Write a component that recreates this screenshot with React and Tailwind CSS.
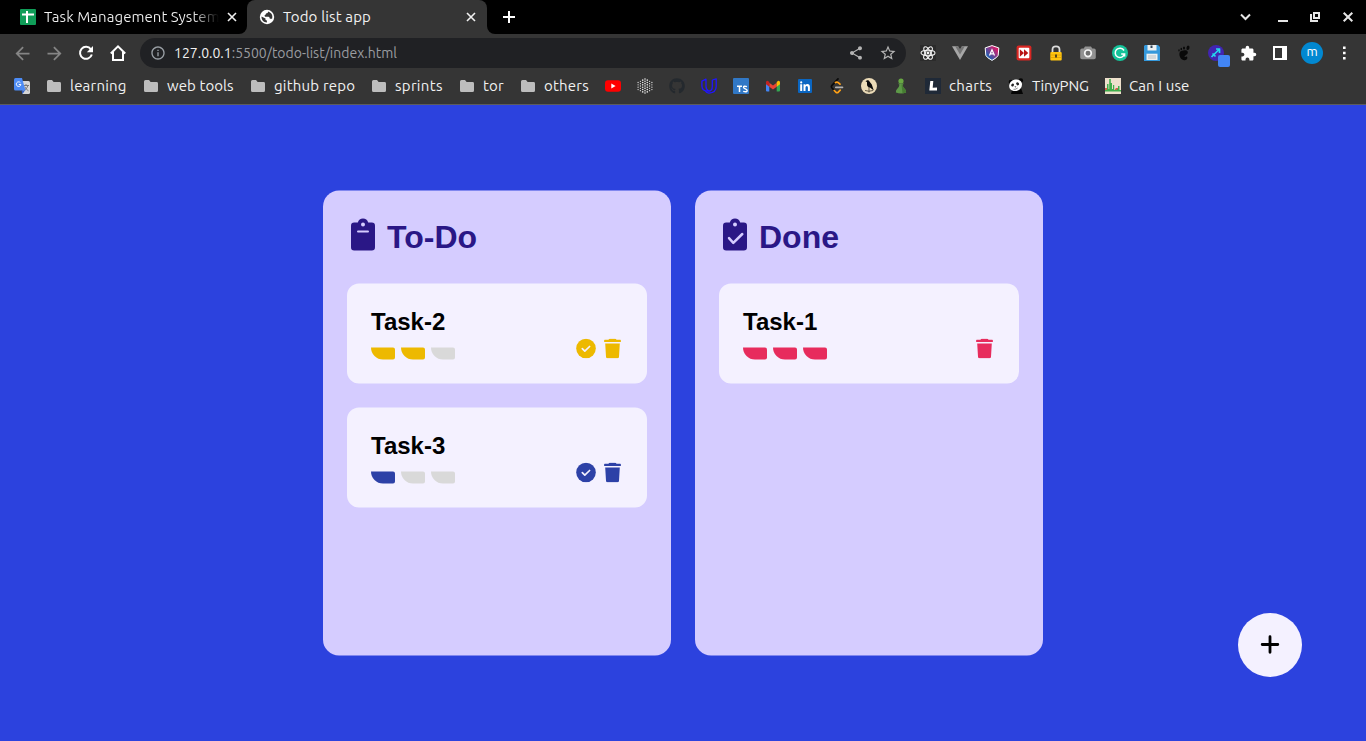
import React from "react";
import { FaGithub } from "react-icons/fa";
import { MdShare, MdStarBorder, MdExtension, MdInfoOutline, MdArrowBack, MdArrowForward } from "react-icons/md";

const Cell = ({ children }) => (
  <div className="flex h-8 w-8 shrink-0 items-center justify-center">{children}</div>
);

const Svg16 = ({ children }) => (
  <svg width="16" height="16" viewBox="0 0 16 16" className="shrink-0">{children}</svg>
);

const TabClose = () => (
  <svg width="14" height="14" viewBox="0 0 14 14" className="shrink-0">
    <path d="M3 3l8 8M11 3l-8 8" stroke="#f1f1f1" strokeWidth="1.600" />
  </svg>
);

const Reload = () => (
  <Svg16>
    <path d="M12.900 4.300A6 6 0 1 0 13.800 9.500" stroke="#fff" strokeWidth="2" fill="none" />
    <path d="M15 1v6.200H8.800z" fill="#fff" />
  </Svg16>
);

const Globe = () => (
  <Svg16>
    <circle cx="8" cy="8" r="7.200" fill="#fff" />
    <path d="M9.200 2.600c-.2 1.300-.8 1.900-2.200 2-.2 1.100-.7 1.500-1.500 1.700l.5 1.500h3.400c1 .2 1.300.9 1.400 2h2.300c.8-2.400.2-5.700-3.900-7.200z" fill="#353535" />
    <path d="M2.500 7.600l4 1.900v1.600l1.400.3v2.200C4.500 13.500 2.300 11 2.500 7.600z" fill="#353535" />
  </Svg16>
);

const ReactLogo = () => (
  <Svg16>
    <rect width="16" height="16" fill="#2b2b2b" />
    <g fill="none" stroke="#f2f2f2" strokeWidth="1.100">
      <ellipse cx="8" cy="8" rx="7" ry="2.700" />
      <ellipse cx="8" cy="8" rx="7" ry="2.700" transform="rotate(60 8 8)" />
      <ellipse cx="8" cy="8" rx="7" ry="2.700" transform="rotate(120 8 8)" />
    </g>
    <circle cx="8" cy="8" r="1.400" fill="#f2f2f2" />
  </Svg16>
);

const Folder = () => (
  <Svg16>
    <path d="M1 3.500Q1 2 2.500 2H6l1.600 2h6Q15 4 15 5.400v7.100Q15 14 13.500 14h-11Q1 14 1 12.500z" fill="#bdbdbd" />
  </Svg16>
);

const Translate = () => (
  <Svg16>
    <path d="M8 3h6.500Q16 3 16 4.500v10Q16 16 14.500 16H8.500z" fill="#d6d6d6" />
    <path d="M9 7.500h6M12 6v1.500M14 7.500q-1 3.500-4 5M10.800 8.800q1.500 3 3.700 4" stroke="#727272" strokeWidth=".9" fill="none" />
    <path d="M1.500 0H8l3.500 12.500H1.500Q0 12.500 0 11V1.500Q0 0 1.500 0z" fill="#4c8bf5" />
    <path d="M11 12.500L8.500 16l-1-3.500z" fill="#2f5fc4" />
    <path d="M6.400 4.700A2.300 2.300 0 1 0 6.900 6.500H4.800" stroke="#fff" strokeWidth="1" fill="none" />
  </Svg16>
);

const Youtube = () => (
  <Svg16>
    <rect x="0" y="2.300" width="16" height="11.500" rx="3" fill="#f00" />
    <path d="M6.300 5.500v5l4.300-2.500z" fill="#fff" />
  </Svg16>
);

const dots = [];
for (let c = 0; c < 7; c++) {
  const n = 7 - Math.abs(c - 3);
  for (let i = 0; i < n; i++) dots.push([8 + (c - 3) * 2.300, 8 + (i - (n - 1) / 2) * 2.350, Math.abs(c - 3)]);
}
const DotGrid = () => (
  <Svg16>
    {dots.map(([x, y, d], i) => (
      <circle key={i} cx={x} cy={y} r={d < 2 ? 0.800 : 0.650} fill="#e4e4e4" />
    ))}
  </Svg16>
);

const Udacity = () => (
  <Svg16>
    <path d="M.9 3.200L5 1.200v7.300q0 3.200 3 4.600Q.9 13.500.9 8z" stroke="#2015ff" strokeWidth="1.300" strokeLinejoin="round" fill="none" />
    <path d="M11.300 2L15.200.8v7.700q0 6-7.200 6.700-2.500-.3-3.500-2M8 13.100q3.300-.3 3.300-4.600V2" stroke="#2015ff" strokeWidth="1.300" strokeLinejoin="round" fill="none" />
  </Svg16>
);

const TypeScript = () => (
  <Svg16>
    <rect width="16" height="16" rx="1" fill="#3178c6" />
    <path d="M4 8.200h5M6.500 8.200V14" stroke="#fff" strokeWidth="1.500" fill="none" />
    <path d="M14 8.700q-3.500-1.100-3.500.6 0 .9 1.800 1.500 1.900.8 1.900 1.800 0 1.900-4 .7" stroke="#fff" strokeWidth="1.400" fill="none" />
  </Svg16>
);

const Gmail = () => (
  <Svg16>
    <path d="M1 4v8.500q0 1 1 1h2.300V6.500z" fill="#4285f4" />
    <path d="M15 4v8.500q0 1-1 1h-2.300V6.500z" fill="#34a853" />
    <path d="M4.300 4.800L8 7.600l3.700-2.800v4L8 11.600 4.300 8.800z" fill="#ea4335" />
    <path d="M1 4.300Q1 2.500 2.700 2.700l1.600 1.200v4.800L1 6.200z" fill="#c5221f" />
    <path d="M15 4.300q0-1.800-1.700-1.600l-1.600 1.200v4.800L15 6.200z" fill="#fbbc04" />
  </Svg16>
);

const LinkedIn = () => (
  <Svg16>
    <rect x="1" y="1" width="14" height="14" rx="1" fill="#0a66c2" />
    <circle cx="4.200" cy="4.400" r="1.100" fill="#fff" />
    <path d="M3.200 6.300h2V13h-2zM6.500 6.300h1.900v.9q.7-1.100 2-1.100 2.500 0 2.500 3V13h-2V9.600q0-1.700-1.100-1.700-1.300 0-1.300 1.700V13h-2z" fill="#fff" />
  </Svg16>
);

const Leet = () => (
  <Svg16>
    <path d="M9 .9L3 7.300q-1.200 1.300 0 2.700l2.200 2.300" stroke="#0a0a0a" strokeWidth="1.700" strokeLinecap="round" fill="none" />
    <path d="M6.500 4.500q1.400-1 2.800.1l1.700 1.600M5.200 12.500l1.700 1.700q1.200.9 2.400 0l1.900-2" stroke="#ffa116" strokeWidth="1.700" fill="none" strokeLinecap="round" />
    <path d="M6.800 9.300h6.700" stroke="#b3b3b3" strokeWidth="1.700" strokeLinecap="round" />
  </Svg16>
);

const Bird = () => (
  <Svg16>
    <circle cx="8" cy="8" r="8" fill="#ecdcb8" />
    <path d="M4.500 3.200l1.700-1q1.800-.3 2.300 1.300l2.300 3.100 2 5.800-3.500-2.600Q5.800 9 6 6.300V4z" fill="#0b0b0b" />
    <path d="M8 9v5.500M4 12.500q4 1.500 8 0" stroke="#40382b" strokeWidth=".8" fill="none" />
  </Svg16>
);

const Pawn = () => (
  <Svg16>
    <circle cx="8" cy="3" r="2.600" fill="#68a843" />
    <path d="M4.900 5.500h6.200l-1.500 1.300q.2 3.100 2.700 4.600.9.900.8 3.200Q8 16.600 2.900 14.600q-.1-2.300.8-3.200 2.500-1.500 2.700-4.600z" fill="#5d9948" />
    <path d="M8.500 6.500h1.100q.2 3.500 2.700 4.900.9.900.8 3.200-1.600.7-3.600.8z" fill="#467c32" />
  </Svg16>
);

const LIcon = () => (
  <Svg16>
    <rect width="16" height="16" fill="#1f2937" />
    <path d="M5.300 3H8.300L7.700 9.700l4.300-.2V12.500H4.300z" fill="#fff" />
  </Svg16>
);

const Panda = () => (
  <Svg16>
    <path d="M4 12l9-2 2 6H3z" fill="#050505" />
    <circle cx="3" cy="4" r="2.300" fill="#050505" />
    <circle cx="12.800" cy="2.600" r="2.300" fill="#050505" />
    <path d="M1.200 7.300Q2 2.400 7 1.500q5.500-.7 6.800 3.500.8 3.800-1.800 6.200-4 3-7.800 1.300Q.8 11 1.200 7.300z" fill="#fff" />
    <ellipse cx="4.600" cy="7" rx="1.300" ry="1.600" transform="rotate(35 4.600 7)" fill="#222" />
    <ellipse cx="9.600" cy="5.800" rx="1.300" ry="1.600" transform="rotate(-35 9.600 5.800)" fill="#222" />
    <path d="M6.300 8.700l2-.5-.6 1.400z" fill="#111" />
    <path d="M5.500 11.300q2.200.3 4.200-1.300" fill="none" stroke="#555" strokeWidth=".7" />
  </Svg16>
);

const CanIUse = () => (
  <Svg16>
    <rect width="16" height="16" fill="#eee0cc" />
    <path d="M0 10h2.500l1 2h6l1.500-2h2v2.500H0z" fill="#d3604c" />
    <path d="M0 12h2V6h1.500v5h.7V1h1.600v4H7v6h1V7h1.200v5H12v-1h1V8h1.500v4H16v1.500H0z" fill="#3fae4b" />
  </Svg16>
);

const bookmarks = [
  { icon: <Translate />, box: "w-8" },
  { icon: <Folder />, label: "learning", box: "w-[97px]", text: "tracking-[0.2px]" },
  { icon: <Folder />, label: "web tools", box: "w-[107px]", text: "tracking-[0.08px]" },
  { icon: <Folder />, label: "github repo", box: "w-[121px]", text: "tracking-[0.2px]" },
  { icon: <Folder />, label: "sprints", box: "w-[88px]", text: "tracking-[0.3px]" },
  { icon: <Folder />, label: "tor", box: "w-[61px]", text: "tracking-[0.2px]" },
  { icon: <Folder />, label: "others", box: "w-[85px]", text: "tracking-[0.2px]" },
  { icon: <Youtube />, box: "w-8" },
  { icon: <DotGrid />, box: "w-8" },
  { icon: <FaGithub size={16} color="#24292e" />, box: "w-8" },
  { icon: <Udacity />, box: "w-8" },
  { icon: <TypeScript />, box: "w-8" },
  { icon: <Gmail />, box: "w-8" },
  { icon: <LinkedIn />, box: "w-8" },
  { icon: <Leet />, box: "w-8" },
  { icon: <Bird />, box: "w-8" },
  { icon: <Pawn />, box: "w-8" },
  { icon: <LIcon />, label: "charts", box: "w-[83px]", text: "tracking-[0.3px]" },
  { icon: <Panda />, label: "TinyPNG", box: "w-[97px]", text: "tracking-[-0.1px]" },
  { icon: <CanIUse />, label: "Can I use", box: "w-[100px]", text: "tracking-[0.1px]" },
];

function TabStrip() {
  return (
    <div className="flex h-[34px] bg-[#353535] text-[15px] text-[#f1f1f1]">
      <div className="flex w-[247px] shrink-0 items-center rounded-br-lg bg-black pl-5">
        <Svg16>
          <rect width="16" height="16" rx="1" fill="#0f9d58" />
          <path d="M2 5.500h12M7 2v12" stroke="#fff" strokeWidth="2" />
        </Svg16>
        <span className="ml-2 w-[175px] overflow-hidden whitespace-nowrap bg-gradient-to-r from-[#f1f1f1] from-85% to-transparent bg-clip-text tracking-[0.05px] text-transparent">
          Task Management System
        </span>
        <span className="ml-1.5"><TabClose /></span>
      </div>
      <div className="flex w-60 shrink-0 bg-black">
        <div className="flex w-full items-center rounded-t-lg bg-[#353535] pl-3">
          <Globe />
          <span className="ml-2 w-[181px] tracking-[0.15px]">Todo list app</span>
          <TabClose />
        </div>
      </div>
      <div className="flex flex-1 items-center rounded-bl-lg bg-black">
        <svg width="12" height="12" viewBox="0 0 12 12" className="ml-4">
          <path d="M0 6h12M6 0v12" stroke="#fff" strokeWidth="2" />
        </svg>
        <div className="ml-auto flex items-center pr-1">
          <svg width="126" height="34" viewBox="0 0 126 34" fill="none" stroke="#e6e6e6" strokeWidth="2">
            <path d="M5 14.500l4.500 4.500 4.500-4.500" />
            <path d="M42 21h10" />
            <path d="M75 14v7h7" />
            <path d="M78 13h5v5h-5z" />
            <path d="M107.700 12.700l8.600 8.600M116.300 12.700l-8.600 8.600" />
          </svg>
        </div>
      </div>
    </div>
  );
}

function Toolbar() {
  return (
    <div className="flex h-[38px] items-center bg-[#353535] pl-[6px] pr-[6px]">
      <Cell><MdArrowBack size={21} color="#858585" /></Cell>
      <Cell><MdArrowForward size={21} color="#858585" /></Cell>
      <Cell><Reload /></Cell>
      <Cell>
        <svg width="18" height="18" viewBox="0 0 18 18" fill="none" stroke="#fff" strokeWidth="2">
          <path d="M1.800 9.500L9 2.400l7.200 7.100M4 8v8h10V8" />
        </svg>
      </Cell>
      <div className="ml-[6px] flex h-[30px] w-[766px] items-center rounded-full bg-[#202124] pl-[10px] text-sm text-[#9a9ca0]">
        <MdInfoOutline size={16} color="#9aa0a6" />
        <span className="ml-2"><span className="text-[#f1f1f1]">127.0.0.1</span>:5500/todo-list/index.html</span>
        <div className="ml-auto mr-[2px] flex">
          <Cell>
            <MdShare size={16} color="#b4b4b4" />
          </Cell>
          <Cell><MdStarBorder size={18} color="#b4b4b4" /></Cell>
        </div>
      </div>
      <div className="ml-[6px] flex">
        <Cell><ReactLogo /></Cell>
        <Cell>
          <Svg16>
            <path d="M0 1.200h6L8 4.800l2-3.600h6L8 15z" fill="#a6a6a6" />
            <path d="M3.200 1.200H6.200L8 4.500l1.800-3.300h3L8 9.500z" fill="#747474" />
          </Svg16>
        </Cell>
        <Cell>
          <Svg16>
            <defs><linearGradient id="shield" x1="0" y1="1" x2="1" y2="0"><stop offset=".2" stopColor="#1b62b5" /><stop offset=".8" stopColor="#d21d6b" /></linearGradient></defs>
            <path d="M8 .6l6.800 2.300-.6 7.400q-.8 2.200-6.200 5.100-5.400-2.900-6.200-5.100L1.200 2.900z" fill="url(#shield)" stroke="#fff" strokeWidth="1" />
            <path d="M5.500 10.500L8 4.700l2.500 5.800M6.300 8.800h3.400" stroke="#fff" strokeWidth="1.200" fill="none" />
          </Svg16>
        </Cell>
        <Cell>
          <Svg16>
            <rect x=".6" y=".6" width="14.800" height="14.800" rx="2" fill="#d92622" />
            <rect x="2.700" y="2.700" width="10.600" height="10.600" rx="1" fill="#fff" />
            <path d="M3.800 4.200L8 8l-4.200 3.800zM8 4.200L12.300 8 8 11.800z" fill="#b91414" />
          </Svg16>
        </Cell>
        <Cell>
          <Svg16>
            <path d="M4.500 8V4.500Q4.500 1.300 8 1.300t3.500 3.200V8" stroke="#dcdcdc" strokeWidth="1.800" fill="none" />
            <rect x="2.300" y="7" width="11.400" height="8.500" rx="1" fill="#ffc50f" />
            <path d="M3 10h10M3 12.500h10" stroke="#dc9900" strokeWidth=".7" />
            <path d="M8 9.500v3" stroke="#222" strokeWidth="1.500" />
          </Svg16>
        </Cell>
        <Cell>
          <Svg16>
            <path d="M5 1.500h6l1.300 2H14q1.800 0 1.800 1.700v7.300q0 1.700-1.800 1.700H2q-1.800 0-1.800-1.700V5.200q0-1.700 1.800-1.700h1.700z" fill="#929292" />
            <circle cx="8" cy="8.300" r="3.300" fill="#707070" stroke="#f4f4f4" strokeWidth="1.700" />
          </Svg16>
        </Cell>
        <Cell>
          <Svg16>
            <circle cx="8" cy="8" r="8" fill="#15c39a" />
            <path d="M12 5.500A4.700 4.700 0 1 0 12.500 9H9.200M12.600 9v2.500" stroke="#fff" strokeWidth="1.500" fill="none" />
          </Svg16>
        </Cell>
        <Cell>
          <Svg16>
            <path d="M1 0h13l2 2v14H0V1z" fill="#3498db" />
            <path d="M3.500 0h9v5.500h-9z" fill="#ecf0f1" /><path d="M6.500 .5h2V3h-2z" fill="#34495e" />
            <path d="M2.500 8.700h11V15h-11z" fill="#ecf0f1" /><path d="M4 11h8M4 13h8" stroke="#b8bec2" />
          </Svg16>
        </Cell>
        <Cell>
          <Svg16>
            <g fill="#090909">
              <path d="M8.500 5.300c3-.3 4.200 1.900 2.700 3.800-1 1.200-3 1.700-2.700 2.500.5 1 2.200-.9 2.700.4.700 2.300-1.400 3.300-3.100 3.200C4 14.800 2.100 8.800 4.300 6.500q1.500-1 4.200-1.200z" />
              <ellipse cx="12" cy="2.800" rx="1.500" ry="2.200" transform="rotate(15 12 2.800)" />
              <ellipse cx="8" cy="3.100" rx="1" ry="1.500" /><ellipse cx="5.300" cy="4" rx=".8" ry="1.300" /><ellipse cx="3" cy="5.400" rx=".7" ry="1.100" />
            </g>
          </Svg16>
        </Cell>
        <Cell>
          <svg width="28" height="28" viewBox="0 0 28 28" className="shrink-0">
            <circle cx="14" cy="14" r="8" fill="#4124b2" />
            <path d="M9.500 18l7.500-7.500M14 10h4M17.500 9.500v4.500M10.500 14.500l3 3" stroke="#24d7ee" strokeWidth="1.700" fill="none" />
            <rect x="16" y="16" width="12" height="12" rx="2" fill="#4285f4" />
          </svg>
        </Cell>
        <Cell><MdExtension size={17} color="#fff" /></Cell>
        <Cell>
          <Svg16><path d="M2 2h12v12H2z" stroke="#fff" strokeWidth="2" fill="none" /><path d="M10 2h4v12h-4z" fill="#fff" /></Svg16>
        </Cell>
        <Cell><div className="flex size-[22px] items-center justify-center rounded-full bg-[#0288d1] pb-0.5 text-[13px] text-white">m</div></Cell>
        <Cell>
          <Svg16><path d="M7 1.500h2.600v2.600H7zM7 6.700h2.600v2.600H7zM7 11.900h2.600v2.600H7z" fill="#fff" /></Svg16>
        </Cell>
      </div>
    </div>
  );
}

function BookmarksBar() {
  return (
    <div className="flex h-[33px] items-center border-b border-[#5c5c5c] bg-[#353535] pb-1 pl-3.5 text-[15px] leading-5 text-[#f1f1f1]">
      {bookmarks.map((b, i) => (
        <div key={i} className={`flex shrink-0 items-center whitespace-nowrap ${b.box}`}>
          {b.icon}
          {b.label && <span className={`ml-2 ${b.text}`}>{b.label}</span>}
        </div>
      ))}
    </div>
  );
}

function Clipboard({ done }) {
  return (
    <svg width="24" height="32" viewBox="0 0 24 32" className="shrink-0 overflow-visible">
      <path d="M3.200 4H6.800Q8 0 12 0t5.200 4h3.600Q24 4 24 7.200v21.600Q24 32 20.800 32H3.200Q0 32 0 28.800V7.200Q0 4 3.200 4z" fill="#2a1786" />
      <circle cx="12" cy="6" r="2" fill="#d5ccff" />
      {done ? (
        <path d="M6 19.700l4.300 4.600 9-8.800" stroke="#d5ccff" strokeWidth="2.500" fill="none" strokeLinecap="round" strokeLinejoin="round" />
      ) : (
        <path d="M7 13h10" stroke="#d5ccff" strokeWidth="2" strokeLinecap="round" />
      )}
    </svg>
  );
}

const CheckCircle = () => (
  <svg width="20" height="20" viewBox="0 0 20 20">
    <circle cx="10" cy="10" r="9.800" fill="currentColor" />
    <path d="M6.300 10.200l2.500 2.400 4.800-4.600" stroke="#f4f1ff" strokeWidth="1.700" fill="none" strokeLinecap="round" strokeLinejoin="round" />
  </svg>
);

const Trash = () => (
  <svg width="18" height="20" viewBox="0 0 18 20">
    <path d="M.8 1.300H4.500Q4.800.2 6 .2h5q1.200 0 1.500 1.100h3.700q.7 0 .7.900v.9q0 .5-.6.5H.7q-.6 0-.6-.5v-.9q0-.9.7-.9zM1.200 5h14.600l-.8 13.200q-.1 1.500-1.500 1.500h-10q-1.400 0-1.500-1.500z" fill="currentColor" />
  </svg>
);

function Task({ title, level, tone, done }) {
  return (
    <div className={`flex h-[100px] items-end justify-between rounded-xl bg-[#f4f1ff] p-6 ${tone}`}>
      <div>
        <h2 className="mb-3 text-2xl leading-[28px] font-bold text-black">{title}</h2>
        <div className="flex gap-1.5">
          {[1, 2, 3].map((n) => (
            <span key={n} className={`h-3 w-6 rounded-r-[2px] rounded-bl-[12px] ${n <= level ? "bg-current" : "bg-[#d9d9d9]"}`} />
          ))}
        </div>
      </div>
      <div className="flex gap-2 pr-px pb-px">
        {!done && <CheckCircle />}
        <Trash />
      </div>
    </div>
  );
}

function Column({ title, done, children }) {
  return (
    <section className="flex h-[465px] w-[348px] flex-col rounded-2xl bg-[#d5ccff] px-6 pt-[27px]">
      <header className="mb-[33px] flex h-[33px] items-center gap-3 pl-1">
        <Clipboard done={done} />
        <h1 className="pt-1 text-[32px] leading-none font-bold text-[#2a1786]">{title}</h1>
      </header>
      <div className="flex flex-col gap-6">{children}</div>
    </section>
  );
}

export default function App() {
  return (
    <div className="flex h-[741px] w-[1366px] flex-col overflow-hidden font-['Ubuntu','Noto_Sans',sans-serif]">
      <TabStrip />
      <Toolbar />
      <BookmarksBar />
      <main className="relative flex flex-1 justify-center bg-[#2c42de] pt-[86px] font-['Liberation_Sans',Arial,sans-serif]">
        <div className="flex h-[465px] -translate-y-[0.5px] gap-6">
          <Column title="To-Do">
            <Task title="Task-2" level={2} tone="text-[#edb900]" />
            <Task title="Task-3" level={1} tone="text-[#2d41a7]" />
          </Column>
          <Column title="Done" done>
            <Task title="Task-1" level={3} tone="text-[#e72c5d]" done />
          </Column>
        </div>
        <button className="absolute right-16 bottom-16 flex size-16 items-center justify-center rounded-full bg-[#f4f1ff]">
          <svg width="20" height="20" viewBox="0 0 20 20" className="-mt-0.5" stroke="#000" strokeWidth="2.800" strokeLinecap="round">
            <path d="M2.200 10.500h15.600M10 2.700v15.600" />
          </svg>
        </button>
      </main>
    </div>
  );
}
